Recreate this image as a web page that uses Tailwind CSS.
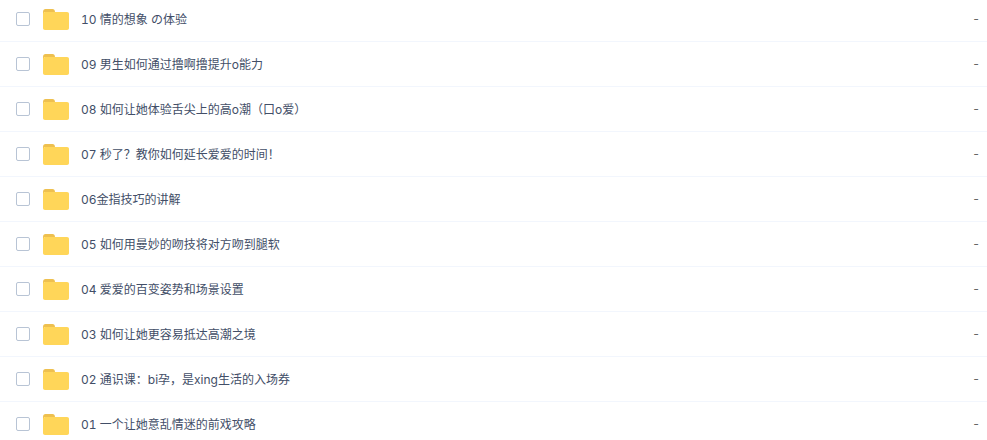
<!DOCTYPE html>
<html lang="en">
<head>
    <meta charset="UTF-8">
    <title>Files</title>
    <script src="https://cdn.jsdelivr.net/npm/@tailwindcss/browser@4"></script>
</head>
<body class="bg-white overflow-hidden">
    <svg class="hidden">
        <symbol id="folder" viewBox="0 0 26 21">
            <path d="M0 3C0 1 1 0 2.500 0H9.500C11 0 12 1 12 3H1V6H0Z" fill="#eec04f"/>
            <path d="M0 5C0 3.800 .8 3 2 3H24C25.200 3 26 3.800 26 5V19C26 20.200 25.200 21 24 21H2C.8 21 0 20.200 0 19Z" fill="#ffd659"/>
        </symbol>
    </svg>
    <ul class="-mt-[3px] text-xs tabular-nums text-[#424e67] font-['Inter','Noto_Sans_CJK_SC',sans-serif]">
        <li class="flex items-center h-[45px] pl-4 pr-[7px] border-b border-[#f2f6fd]">
            <span class="w-[14px] h-[14px] border border-[#b8c4d5] rounded-[2px]"></span>
            <svg class="w-[26px] h-[21px] ml-[13px]"><use href="#folder"/></svg>
            <span class="ml-3 flex-1 pt-px">10 情的想象 の体验</span>
            <span class="text-[#666]">-</span>
        </li>
        <li class="flex items-center h-[45px] pl-4 pr-[7px] border-b border-[#f2f6fd]">
            <span class="w-[14px] h-[14px] border border-[#b8c4d5] rounded-[2px]"></span>
            <svg class="w-[26px] h-[21px] ml-[13px]"><use href="#folder"/></svg>
            <span class="ml-3 flex-1 pt-px">09 男生如何通过撸啊撸提升o能力</span>
            <span class="text-[#666]">-</span>
        </li>
        <li class="flex items-center h-[45px] pl-4 pr-[7px] border-b border-[#f2f6fd]">
            <span class="w-[14px] h-[14px] border border-[#b8c4d5] rounded-[2px]"></span>
            <svg class="w-[26px] h-[21px] ml-[13px]"><use href="#folder"/></svg>
            <span class="ml-3 flex-1 pt-px">08 如何让她体验舌尖上的高o潮（口o爱）</span>
            <span class="text-[#666]">-</span>
        </li>
        <li class="flex items-center h-[45px] pl-4 pr-[7px] border-b border-[#f2f6fd]">
            <span class="w-[14px] h-[14px] border border-[#b8c4d5] rounded-[2px]"></span>
            <svg class="w-[26px] h-[21px] ml-[13px]"><use href="#folder"/></svg>
            <span class="ml-3 flex-1 pt-px">07 秒了？教你如何延长爱爱的时间！</span>
            <span class="text-[#666]">-</span>
        </li>
        <li class="flex items-center h-[45px] pl-4 pr-[7px] border-b border-[#f2f6fd]">
            <span class="w-[14px] h-[14px] border border-[#b8c4d5] rounded-[2px]"></span>
            <svg class="w-[26px] h-[21px] ml-[13px]"><use href="#folder"/></svg>
            <span class="ml-3 flex-1 pt-px">06金指技巧的讲解</span>
            <span class="text-[#666]">-</span>
        </li>
        <li class="flex items-center h-[45px] pl-4 pr-[7px] border-b border-[#f2f6fd]">
            <span class="w-[14px] h-[14px] border border-[#b8c4d5] rounded-[2px]"></span>
            <svg class="w-[26px] h-[21px] ml-[13px]"><use href="#folder"/></svg>
            <span class="ml-3 flex-1 pt-px">05 如何用曼妙的吻技将对方吻到腿软</span>
            <span class="text-[#666]">-</span>
        </li>
        <li class="flex items-center h-[45px] pl-4 pr-[7px] border-b border-[#f2f6fd]">
            <span class="w-[14px] h-[14px] border border-[#b8c4d5] rounded-[2px]"></span>
            <svg class="w-[26px] h-[21px] ml-[13px]"><use href="#folder"/></svg>
            <span class="ml-3 flex-1 pt-px">04 爱爱的百变姿势和场景设置</span>
            <span class="text-[#666]">-</span>
        </li>
        <li class="flex items-center h-[45px] pl-4 pr-[7px] border-b border-[#f2f6fd]">
            <span class="w-[14px] h-[14px] border border-[#b8c4d5] rounded-[2px]"></span>
            <svg class="w-[26px] h-[21px] ml-[13px]"><use href="#folder"/></svg>
            <span class="ml-3 flex-1 pt-px">03 如何让她更容易抵达高潮之境</span>
            <span class="text-[#666]">-</span>
        </li>
        <li class="flex items-center h-[45px] pl-4 pr-[7px] border-b border-[#f2f6fd]">
            <span class="w-[14px] h-[14px] border border-[#b8c4d5] rounded-[2px]"></span>
            <svg class="w-[26px] h-[21px] ml-[13px]"><use href="#folder"/></svg>
            <span class="ml-3 flex-1 pt-px">02 通识课：bi孕，是xing生活的入场券</span>
            <span class="text-[#666]">-</span>
        </li>
        <li class="flex items-center h-[45px] pl-4 pr-[7px] border-b border-[#f2f6fd]">
            <span class="w-[14px] h-[14px] border border-[#b8c4d5] rounded-[2px]"></span>
            <svg class="w-[26px] h-[21px] ml-[13px]"><use href="#folder"/></svg>
            <span class="ml-3 flex-1 pt-px">01 一个让她意乱情迷的前戏攻略</span>
            <span class="text-[#666]">-</span>
        </li>
    </ul>
</body>
</html>
